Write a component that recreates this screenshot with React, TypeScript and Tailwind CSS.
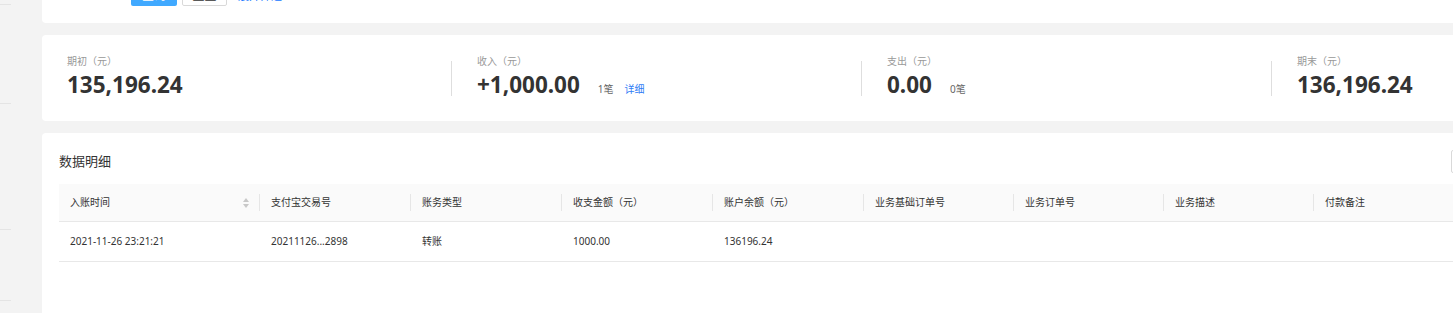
const font = '"Noto Sans", "Noto Sans CJK SC", sans-serif';

const stats = [
  { label: '期初（元）', value: '135,196.24' },
  { label: '收入（元）', value: '+1,000.00', count: '1笔', link: '详细' },
  { label: '支出（元）', value: '0.00', count: '0笔' },
  { label: '期末（元）', value: '136,196.24' },
];

const columns = [
  { title: '入账时间', w: 'w-[201px]', sort: true },
  { title: '支付宝交易号', w: 'w-[151px]' },
  { title: '账务类型', w: 'w-[151px]' },
  { title: '收支金额（元）', w: 'w-[151px]' },
  { title: '账户余额（元）', w: 'w-[151px]' },
  { title: '业务基础订单号', w: 'w-[150px]' },
  { title: '业务订单号', w: 'w-[150px]' },
  { title: '业务描述', w: 'w-[150px]' },
  { title: '付款备注', w: 'w-[150px]' },
];

const row = ['2021-11-26 23:21:21', '20211126...2898', '转账', '1000.00', '136196.24', '', '', '', ''];

function SortIcon() {
  return (
    <svg width="6" height="10" viewBox="0 0 6 10" className="mr-[10px]">
      <polygon points="3,0 6,4 0,4" fill="#c8c8c8" />
      <polygon points="3,10 6,6 0,6" fill="#c8c8c8" />
    </svg>
  );
}

export default function App() {
  return (
    <div
      className="w-[1453px] h-[313px] overflow-hidden flex bg-[#f3f3f3]"
      style={{ fontFamily: font }}
    >
      {/* Sidebar */}
      <div className="w-[42px] shrink-0 flex flex-col">
        <div className="h-[4px]" />
        <div className="w-[11px] h-px bg-[#e4e4e4]" />
        <div className="h-[98px]" />
        <div className="w-[11px] h-px bg-[#e4e4e4]" />
        <div className="h-[125px]" />
        <div className="w-[11px] h-px bg-[#e4e4e4]" />
        <div className="h-[70px]" />
        <div className="w-[11px] h-px bg-[#e4e4e4]" />
      </div>

      {/* Main */}
      <div className="w-[1486px] shrink-0 flex flex-col gap-[12px]">
        {/* Filter card (scrolled off) */}
        <div className="h-[23px] bg-white rounded-b-[4px] overflow-hidden flex items-end pl-[89px] pb-[17px]">
          <div className="flex items-center gap-[5px] shrink-0">
            <button className="w-[46px] h-[20px] bg-[#40a9ff] text-white text-[12px] leading-[20px] rounded-[2px]">查询</button>
            <button className="w-[45px] h-[20px] bg-white border border-[#d9d9d9] text-[#333] text-[12px] leading-[18px] rounded-[2px]">重置</button>
            <span className="ml-[6px] text-[#1677ff] text-[11px] leading-[20px]">展开筛选</span>
          </div>
        </div>

        {/* Summary card */}
        <div className="h-[86px] bg-white rounded-[4px] flex pt-[20px]">
          {stats.map((s, i) => (
            <div key={s.label} className={`shrink-0 flex items-start ${i === 0 ? 'w-[409px]' : 'w-[410px]'}`}>
              {i > 0 && <div className="w-px h-[35px] bg-[#dedede] mt-[6px]" />}
              <div className="pl-[25px] flex flex-col">
                <div className="text-[10px] leading-[12px] text-[#999]">{s.label}</div>
                <div className="mt-[6px] flex items-baseline">
                  <span className="text-[22.5px] leading-[24px] font-bold text-[#333]">{s.value}</span>
                  {s.count && <span className="ml-[18px] text-[10px] text-[#666]">{s.count}</span>}
                  {s.link && <span className="ml-[11px] text-[10px] text-[#2f7cf6]">{s.link}</span>}
                </div>
              </div>
            </div>
          ))}
        </div>

        {/* Detail card */}
        <div className="flex-1 bg-white rounded-t-[4px] pl-[17px] pr-[17px] pt-[17px]">
          <div className="flex items-center justify-between h-[23px] mb-[11px]">
            <span className="text-[13px] text-[#333]">数据明细</span>
            <button className="w-[60px] h-[23px] border border-[#d9d9d9] rounded-[2px] bg-white text-[11px] text-[#333]">导出</button>
          </div>

          {/* Table header */}
          <div className="flex h-[38px] bg-[#fafafa] border-b border-[#e8e8e8]">
            {columns.map((c) => (
              <div key={c.title} className={`${c.w} shrink-0 flex items-center pl-[11px]`}>
                <span className="flex-1 text-[10px] text-[#333]">{c.title}</span>
                {c.sort && <SortIcon />}
                <div className="w-px h-[17px] bg-[#e6e6e6]" />
              </div>
            ))}
          </div>

          {/* Table row */}
          <div className="flex h-[40px] border-b border-[#e8e8e8]">
            {columns.map((c, i) => (
              <div key={c.title} className={`${c.w} shrink-0 flex items-center pl-[11px] text-[10px] text-[#333]`}>
                {row[i]}
              </div>
            ))}
          </div>
        </div>
      </div>
    </div>
  );
}
